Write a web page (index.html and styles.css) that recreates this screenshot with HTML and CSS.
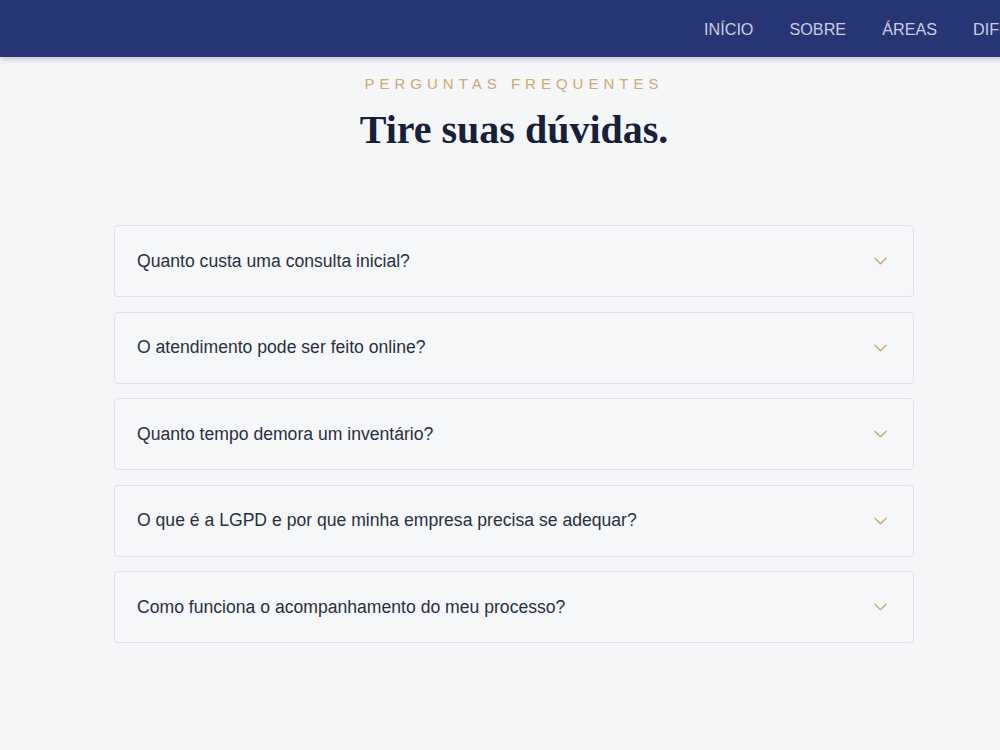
FILE: index.html
```html
<!DOCTYPE html>
<html lang="pt-BR">
<head>
<meta charset="utf-8">
<title>Perguntas frequentes</title>
<link rel="stylesheet" href="styles.css">
</head>
<body>
<div class="page">
  <header class="topbar">
    <nav class="nav">
      <a href="#">INÍCIO</a>
      <a href="#">SOBRE</a>
      <a href="#">ÁREAS</a>
      <a href="#">DIFERENCIAIS</a>
      <a href="#">CONTATO</a>
    </nav>
  </header>

  <main class="faq">
    <p class="eyebrow">PERGUNTAS FREQUENTES</p>
    <h1 class="title">Tire suas dúvidas.</h1>

    <div class="list">
      <div class="item"><span>Quanto custa uma consulta inicial?</span><svg class="chev" viewBox="0 0 14 8"><path d="M1 1l6 6 6-6"/></svg></div>
      <div class="item"><span>O atendimento pode ser feito online?</span><svg class="chev" viewBox="0 0 14 8"><path d="M1 1l6 6 6-6"/></svg></div>
      <div class="item"><span>Quanto tempo demora um inventário?</span><svg class="chev" viewBox="0 0 14 8"><path d="M1 1l6 6 6-6"/></svg></div>
      <div class="item"><span>O que é a LGPD e por que minha empresa precisa se adequar?</span><svg class="chev" viewBox="0 0 14 8"><path d="M1 1l6 6 6-6"/></svg></div>
      <div class="item"><span>Como funciona o acompanhamento do meu processo?</span><svg class="chev" viewBox="0 0 14 8"><path d="M1 1l6 6 6-6"/></svg></div>
    </div>
  </main>
</div>
</body>
</html>
```

FILE: styles.css
```css
html, body {
  margin: 0;
  padding: 0;
  overflow: hidden;
  background: #f5f6f8;
}

.page {
  width: 1028px;
  min-height: 750px;
  font-family: "Liberation Sans", Arial, sans-serif;
}

/* top navigation bar; the menu runs on past the right edge */
.topbar {
  height: 57px;
  background: #283574;
  box-shadow: 0 2px 6px rgba(20, 30, 60, 0.25);
  display: flex;
  align-items: center;
  padding-left: 704px;
  position: relative;
  z-index: 1;
}

.nav {
  display: flex;
  gap: 36px;
  white-space: nowrap;
}

.nav a {
  color: #c9cee3;
  text-decoration: none;
  font-size: 16.2px;
  line-height: 20px;
}

.faq {
  width: 800px;
  margin: 0 auto;
  padding-top: 17px;
  display: flex;
  flex-direction: column;
  align-items: center;
}

.eyebrow {
  margin: 0;
  color: #c9ab72;
  font-size: 15px;
  letter-spacing: 5px;
  line-height: 20px;
}

.title {
  margin: 13px 0 0;
  font-family: "Liberation Serif", "Times New Roman", serif;
  font-weight: bold;
  font-size: 40px;
  line-height: 46px;
  color: #16203a;
}

.list {
  width: 100%;
  margin-top: 72px;
  display: flex;
  flex-direction: column;
  gap: 14.5px;
}

.item {
  box-sizing: border-box;
  height: 72px;
  border: 1px solid #dfe1e6;
  border-radius: 4px;
  background: #f6f7f9;
  display: flex;
  align-items: center;
  justify-content: space-between;
  padding: 0 26px 0 22px;
  font-size: 17.6px;
  color: #283040;
}

.chev {
  width: 13px;
  height: 8px;
  fill: none;
  stroke: #c9ab72;
  stroke-width: 1.6;
  stroke-linecap: round;
  stroke-linejoin: round;
}
```
